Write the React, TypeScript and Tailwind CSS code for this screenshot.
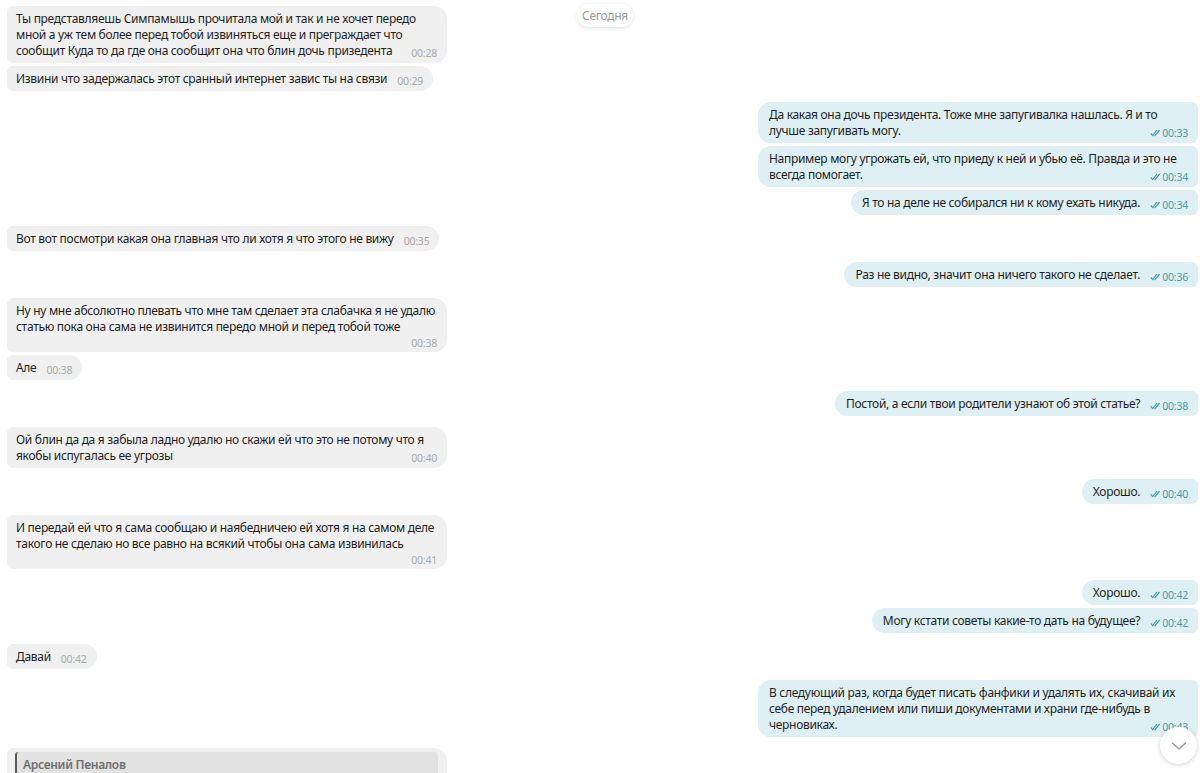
import React from "react";

type Msg = { out: boolean; lines: string[]; time: string; timeOwn?: boolean; full?: boolean };

const msgs: Msg[] = [
  {
    out: false,
    full: true,
    lines: [
      "Ты представляешь Симпамышь прочитала мой и так и не хочет передо",
      "мной а уж тем более перед тобой извиняться еще и преграждает что",
      "сообщит Куда то да где она сообщит она что блин дочь призедента",
    ],
    time: "00:28",
  },
  { out: false, lines: ["Извини что задержалась этот сранный интернет завис ты на связи"], time: "00:29" },
  {
    out: true,
    full: true,
    lines: ["Да какая она дочь президента. Тоже мне запугивалка нашлась. Я и то", "лучше запугивать могу."],
    time: "00:33",
  },
  {
    out: true,
    full: true,
    lines: ["Например могу угрожать ей, что приеду к ней и убью её. Правда и это не", "всегда помогает."],
    time: "00:34",
  },
  { out: true, lines: ["Я то на деле не собирался ни к кому ехать никуда."], time: "00:34" },
  { out: false, lines: ["Вот вот посмотри какая она главная что ли хотя я что этого не вижу"], time: "00:35" },
  { out: true, lines: ["Раз не видно, значит она ничего такого не сделает."], time: "00:36" },
  {
    out: false,
    full: true,
    timeOwn: true,
    lines: [
      "Ну ну мне абсолютно плевать что мне там сделает эта слабачка я не удалю",
      "статью пока она сама не извинится передо мной и перед тобой тоже",
    ],
    time: "00:38",
  },
  { out: false, lines: ["Але"], time: "00:38" },
  { out: true, lines: ["Постой, а если твои родители узнают об этой статье?"], time: "00:38" },
  {
    out: false,
    full: true,
    lines: ["Ой блин да да я забыла ладно удалю но скажи ей что это не потому что я", "якобы испугалась ее угрозы"],
    time: "00:40",
  },
  { out: true, lines: ["Хорошо."], time: "00:40" },
  {
    out: false,
    full: true,
    timeOwn: true,
    lines: [
      "И передай ей что я сама сообщаю и наябедничею ей хотя я на самом деле",
      "такого не сделаю но все равно на всякий чтобы она сама извинилась",
    ],
    time: "00:41",
  },
  { out: true, lines: ["Хорошо."], time: "00:42" },
  { out: true, lines: ["Могу кстати советы какие-то дать на будущее?"], time: "00:42" },
  { out: false, lines: ["Давай"], time: "00:42" },
  {
    out: true,
    full: true,
    lines: [
      "В следующий раз, когда будет писать фанфики и удалять их, скачивай их",
      "себе перед удалением или пиши документами и храни где-нибудь в",
      "черновиках.",
    ],
    time: "00:43",
  },
];

function Check() {
  return (
    <svg width="11" height="8" viewBox="0 0 11 8" className="mr-[1px] shrink-0">
      <path d="M0.8 4.4 L2.7 6.6 L7 1" fill="none" stroke="#3f9fad" strokeWidth="1.2" />
      <path d="M4.6 6.3 L5 6.7 L9.6 1" fill="none" stroke="#3f9fad" strokeWidth="1.2" />
    </svg>
  );
}

function Time({ out, t }: { out: boolean; t: string }) {
  return (
    <span
      className={
        "flex items-center shrink-0 text-[10.5px] leading-[12px] tracking-[-0.2px] " +
        (out ? "text-[#3f9fad]" : "text-[#ababab]")
      }
    >
      {out && <Check />}
      {t}
    </span>
  );
}

function Bubble({ m }: { m: Msg }) {
  const last = m.lines.length - 1;
  const h = m.timeOwn
    ? "h-[54px]"
    : m.lines.length === 3
    ? "h-[57px]"
    : m.lines.length === 2
    ? "h-[41px]"
    : "h-[25px]";
  return (
    <div
      className={
        (m.out
          ? "self-end bg-[#dff0f4] rounded-l-[13px] rounded-r-[6px] mr-[2px] pl-[11px]"
          : "self-start bg-[#f0f0f0] rounded-r-[13px] rounded-l-[6px] ml-[7px] pl-[9px]") +
        " pr-[10px] pt-[5px] " +
        h +
        " " +
        (m.full ? "w-[440px]" : "")
      }
    >
      {m.lines.map((l, i) =>
        i === last && !m.timeOwn ? (
          <div key={i} className="flex items-end justify-between gap-[10px]">
            <span className="whitespace-nowrap">{l}</span>
            <Time out={m.out} t={m.time} />
          </div>
        ) : (
          <div key={i} className="whitespace-nowrap">
            {l}
          </div>
        )
      )}
      {m.timeOwn && (
        <div className="flex justify-end pt-[2px]">
          <Time out={m.out} t={m.time} />
        </div>
      )}
    </div>
  );
}

export default function App() {
  return (
    <div
      className="relative h-[773px] w-[1200px] overflow-hidden bg-white text-[12px] leading-[16px] tracking-[-0.3px] text-[#1e1e1e]"
      style={{ fontFamily: '"Noto Sans", "Open Sans", sans-serif' }}
    >
      <div className="flex flex-col pt-[6px]">
        {msgs.map((m, i) => {
          const prev = i > 0 ? msgs[i - 1] : null;
          const mt = !prev ? "" : prev.out === m.out ? "mt-[3px]" : "mt-[11px]";
          return (
            <div key={i} className={"flex flex-col " + mt}>
              <Bubble m={m} />
            </div>
          );
        })}
        <div className="mt-[11px] ml-[7px] w-[440px] h-[60px] bg-[#f0f0f0] rounded-r-[13px] rounded-l-[6px] pt-[4px] pl-[8px] pr-[9px]">
          <div className="bg-[#e2e2e2] rounded-[3px] border-l-2 border-[#5a5a5a] h-[40px] pl-[6px] pt-[5px] font-semibold text-[#6f6f6f] text-[12px]">
            Арсений Пеналов
          </div>
        </div>
      </div>

      <div className="absolute left-[505px] top-[4px] w-[200px] flex justify-center">
        <div className="h-[23px] px-[5px] flex items-center rounded-full bg-white shadow-[0_1px_4px_rgba(0,0,0,0.12)] text-[12px] text-[#9a9a9a]">
          Сегодня
        </div>
      </div>

      <div className="absolute left-[1160px] top-[727px] w-[37px] h-[37px] rounded-full bg-white shadow-[0_1px_5px_rgba(0,0,0,0.18)] flex items-center justify-center">
        <svg width="16" height="10" viewBox="0 0 16 10">
          <path d="M1.5 2 L8 8 L14.5 2" fill="none" stroke="#9a9a9a" strokeWidth="1.4" strokeLinecap="round" strokeLinejoin="round" />
        </svg>
      </div>
    </div>
  );
}
